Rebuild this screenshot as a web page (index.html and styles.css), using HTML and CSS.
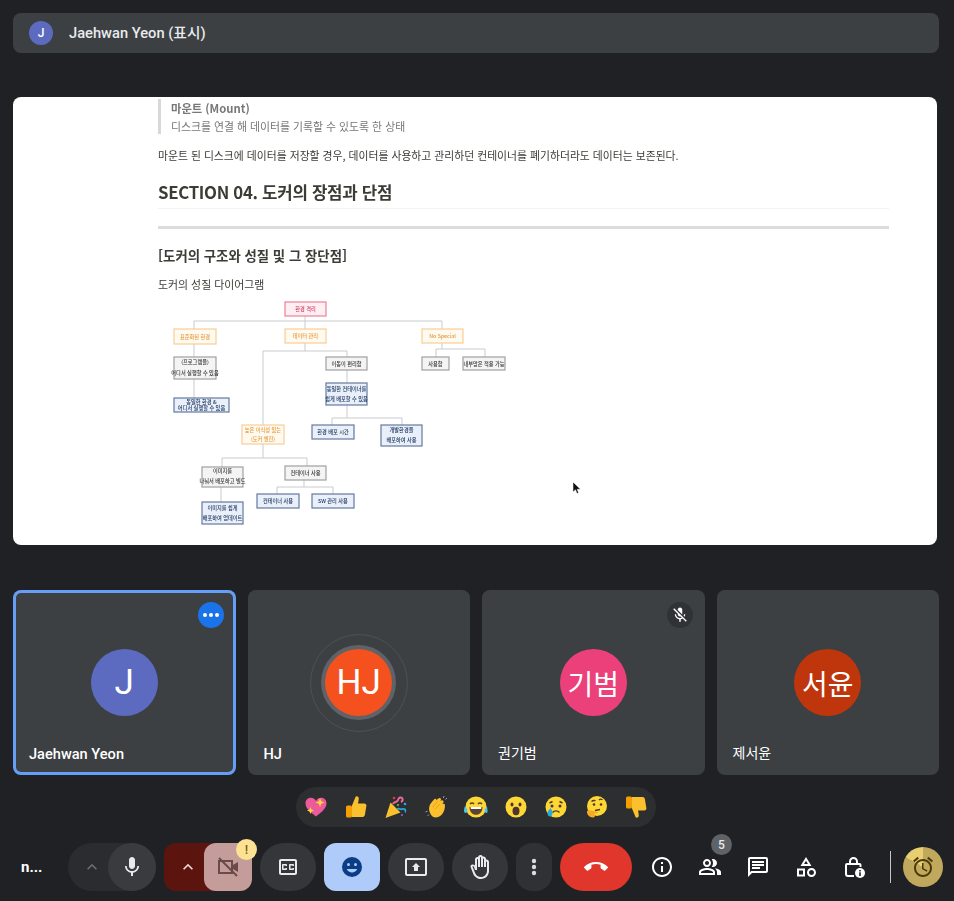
FILE: index.html
```html
<!DOCTYPE html>
<html lang="ko">
<head>
  <meta charset="UTF-8">
  <title>Meet</title>
  <link rel="stylesheet" href="styles.css">
</head>
<body>
  <div class="page">
    <!-- 발표자 표시줄 -->
    <div class="presenter-bar">
      <span class="mini-avatar">J</span>
      <span class="presenter-name">Jaehwan Yeon (표시)</span>
    </div>

    <!-- 공유 화면 -->
    <div class="slide">
      <div class="doc">
        <div class="quote">
          <p class="quote-title">마운트 (Mount)</p>
          <p class="quote-text">디스크를 연결 해 데이터를 기록할 수 있도록 한 상태</p>
        </div>
        <p class="para">마운트 된 디스크에 데이터를 저장할 경우, 데이터를 사용하고 관리하던 컨테이너를 폐기하더라도 데이터는 보존된다.</p>
        <h1 class="sec-title">SECTION 04. 도커의 장점과 단점</h1>
        <div class="rule-faint"></div>
        <div class="rule"></div>
        <h2 class="sub-title">[도커의 구조와 성질 및 그 장단점]</h2>
        <p class="caption">도커의 성질 다이어그램</p>
        <svg class="diagram" viewBox="150 295 370 240" width="370" height="240">
          <g class="links">
            <path d="M305 316V321M194 329V321H442V329M305 321V329"/>
            <path d="M194 344V357M194 379V398"/>
            <path d="M305 343V351M263 425V351H347V357"/>
            <path d="M347 370V383M347 405V418M332 425V418H402V425"/>
            <path d="M263 444V458M222 467V458H307V466"/>
            <path d="M221 487V502M304 480V487M277 494V487H333V494"/>
            <path d="M442 343V349M436 357V349H485V357"/>
          </g>
          <g class="node red"><rect x="285" y="302" width="41" height="14"/><text x="305.500" y="311">환경 격리</text></g>
          <g class="node orange"><rect x="174" y="329" width="42" height="15"/><text x="195" y="339">표준화된 환경</text></g>
          <g class="node orange"><rect x="285" y="329" width="41" height="14"/><text x="305.500" y="338">데이터 관리</text></g>
          <g class="node orange"><rect x="422" y="329" width="41" height="14"/><text x="442.500" y="338">No Special</text></g>
          <g class="node gray"><rect x="174" y="357" width="42" height="22"/><text x="195" y="364">(프로그램을)</text><text x="195" y="375">어디서 실행할 수 있음</text></g>
          <g class="node blue"><rect x="174" y="398" width="55" height="14"/><text x="201.500" y="404">동일한 환경 &amp;</text><text x="201.500" y="410">어디서 실행할 수 있음</text></g>
          <g class="node gray"><rect x="326" y="357" width="41" height="13"/><text x="346.500" y="366">이동이 편리함</text></g>
          <g class="node blue"><rect x="326" y="383" width="41" height="22"/><text x="346.500" y="391">동일한 컨테이너를</text><text x="346.500" y="401">쉽게 배포할 수 있음</text></g>
          <g class="node blue"><rect x="312" y="425" width="42" height="14"/><text x="333" y="434">환경 배포 시간</text></g>
          <g class="node blue"><rect x="381" y="425" width="41" height="21"/><text x="401.500" y="432">개발환경을</text><text x="401.500" y="442">배포하여 사용</text></g>
          <g class="node orange"><rect x="242" y="425" width="42" height="19"/><text x="263" y="432">높은 이식성 있는</text><text x="263" y="441">(도커 엔진)</text></g>
          <g class="node gray"><rect x="202" y="467" width="41" height="20"/><text x="222.500" y="473">이미지를</text><text x="222.500" y="483">나눠서 배포하고 빌드</text></g>
          <g class="node gray"><rect x="285" y="466" width="41" height="14"/><text x="305.500" y="475">컨테이너 사용</text></g>
          <g class="node blue"><rect x="202" y="502" width="41" height="22"/><text x="222.500" y="510">이미지를 쉽게</text><text x="222.500" y="520">배포하여 업데이트</text></g>
          <g class="node blue"><rect x="257" y="494" width="42" height="14"/><text x="278" y="503">컨테이너 사용</text></g>
          <g class="node blue"><rect x="312" y="494" width="42" height="14"/><text x="333" y="503">SW 관리 사용</text></g>
          <g class="node gray"><rect x="422" y="357" width="27" height="13"/><text x="435.500" y="366">사용함</text></g>
          <g class="node gray"><rect x="463" y="357" width="42" height="13"/><text x="484" y="366">내부망은 적용 가능</text></g>
        </svg>
      </div>
      <svg class="cursor" viewBox="0 0 10 14" width="10" height="14"><path d="M1 1v10l2.500-2.200L5 12.500l1.600-.7L5.200 8.300H8.500z"/></svg>
    </div>

    <!-- 참가자 타일 -->
    <div class="tiles">
      <div class="tile selected">
        <span class="avatar indigo">J</span>
        <span class="tile-name">Jaehwan Yeon</span>
        <span class="tile-badge blue-dot"><i></i><i></i><i></i></span>
      </div>
      <div class="tile">
        <span class="ring"><span class="avatar orange-bg talking">HJ</span></span>
        <span class="tile-name">HJ</span>
      </div>
      <div class="tile">
        <span class="avatar pink ko">기범</span>
        <span class="tile-name ko-name">권기범</span>
        <span class="tile-badge muted">
          <svg viewBox="0 0 24 24" width="18" height="18"><path d="M19 11h-1.700c0 .74-.16 1.430-.43 2.050l1.230 1.230c.56-.98.9-2.090.9-3.280zm-4.020.17c0-.06.02-.11.02-.17V5c0-1.660-1.340-3-3-3S9 3.340 9 5v.18l5.980 5.990zM4.270 3L3 4.270l6.010 6.010V11c0 1.660 1.330 3 2.990 3 .22 0 .44-.03.65-.08l1.660 1.660c-.71.33-1.500.52-2.310.52-2.760 0-5.300-2.100-5.300-5.100H5c0 3.410 2.720 6.230 6 6.720V21h2v-3.280c.91-.13 1.770-.45 2.540-.9L19.730 21 21 19.730 4.270 3z"/></svg>
        </span>
      </div>
      <div class="tile">
        <span class="avatar rust ko">서윤</span>
        <span class="tile-name ko-name">제서윤</span>
      </div>
    </div>

    <!-- 이모지 반응 -->
    <div class="emoji-row">
      <div class="emoji-bar">
        <svg class="emo" viewBox="0 0 24 24"><path fill="#ec5a9b" d="M12 21.500C5 16.500 1.500 12.500 1.500 8.300 1.500 5 4 2.800 6.800 2.800c2.200 0 4 1.200 5.200 3.200 1.200-2 3-3.200 5.200-3.200 2.800 0 5.300 2.200 5.300 5.500 0 4.200-3.500 8.200-10.500 13.200z"/><path fill="#fdd835" d="M16 3l1.200 3.300L20.500 7.500l-3.300 1.200L16 12l-1.200-3.300-3.300-1.200 3.300-1.200zM6.500 12l1 2.500 2.500 1-2.500 1-1 2.500-1-2.500-2.500-1 2.500-1z"/></svg>
        <svg class="emo" viewBox="0 0 24 24"><path fill="#fbc02d" d="M8 10.500l3.500-8.500c.5-1.200 3.300-.8 3.300 1.500 0 1.500-.5 3.200-.8 5h6.200c1.500 0 2.400 1.200 2.200 2.300l-1.500 9c-.2 1.200-1 2.200-2.200 2.200H8z"/><rect fill="#f59f00" x="2" y="10.500" width="6" height="12" rx="1.500"/></svg>
        <svg class="emo" viewBox="0 0 24 24"><path fill="#fbc02d" d="M1.500 23l5-15.500 10 10z"/><path fill="none" stroke="#e86a9a" stroke-width="2" d="M9 9c1-3 4-1 5-4s3-3 4-2 1 3-1 4"/><path fill="none" stroke="#29a8df" stroke-width="1.800" d="M13 14c3-1 3 1 6 0s2 3 3 3"/><circle fill="#e53935" cx="10" cy="3" r="1.300"/><circle fill="#29a8df" cx="21" cy="9" r="1.300"/><circle fill="#8e5bd0" cx="18" cy="20" r="1.100"/><circle fill="#7cb342" cx="14" cy="10" r="1.100"/></svg>
        <svg class="emo" viewBox="0 0 24 24"><path fill="#fbc02d" d="M6 9.500c1.500-2 3-4 4.500-5.500 1-1 2.500.2 1.700 1.500 1.500-2 3.300-3 4.300-2.200s.5 1.800-.3 2.800c1.200-1 2.700-1 3.200 0s-.2 1.800-1 2.800c1-.5 2.300-.3 2.500.8.3 3.200-.6 7-3 9.800-2.700 3-6.500 3.800-9 2.300C5.500 19 4 14 6 9.500z"/><path fill="none" stroke="#f59f00" stroke-width="1" d="M8.500 12l5-5.500M11 14l5-5"/><path fill="none" stroke="#9aa0a6" stroke-width="1" d="M1.500 17l2-.8M3.500 21l1.500-1.500M20 1l-.6 2M23 3l-1.500 1.500"/></svg>
        <svg class="emo" viewBox="0 0 24 24"><circle fill="#fdd835" cx="12" cy="12" r="10.500"/><path fill="#5d4037" d="M5.500 12h13c0 5-3 7.800-6.500 7.800S5.500 17 5.500 12z"/><path fill="#fff" d="M6.500 12h11l-.4 2H6.900z"/><path fill="none" stroke="#5d4037" stroke-width="1.500" d="M6 9c1-1.500 3-1.500 4 0M14 9c1-1.500 3-1.500 4 0"/><path fill="#4fc3f7" d="M1 11c1 1.500 2.500 3 2.500 4.500 0 1.500-1 2.500-2 2.500S0 17 0 15.500C0 14 .5 12.500 1 11zM23 11c-1 1.500-2.500 3-2.500 4.500 0 1.500 1 2.500 2 2.500s1-1 1-2.500c0-1.500-.5-3-.5-4.500z"/></svg>
        <svg class="emo" viewBox="0 0 24 24"><circle fill="#fdd835" cx="12" cy="12" r="10.500"/><ellipse fill="#4e342e" cx="8" cy="9.500" rx="1.500" ry="2"/><ellipse fill="#4e342e" cx="16" cy="9.500" rx="1.500" ry="2"/><ellipse fill="#4e342e" cx="12" cy="16" rx="3.500" ry="4.200"/></svg>
        <svg class="emo" viewBox="0 0 24 24"><circle fill="#fdd835" cx="12" cy="12" r="10.500"/><circle fill="#4e342e" cx="8" cy="11" r="1.500"/><circle fill="#4e342e" cx="16" cy="11" r="1.500"/><path fill="none" stroke="#4e342e" stroke-width="1.500" d="M8.500 17.500c2-2 5-2 7 0M5.500 8l3-1.500M18.500 8l-3-1.500"/><path fill="#29a8df" d="M6.500 13c1 1.500 2 3 2 5s-1 3.500-2.500 3.500S3.500 20 3.500 18c0-2 2-3.500 3-5z"/></svg>
        <svg class="emo" viewBox="0 0 24 24"><circle fill="#fdd835" cx="13" cy="11" r="10"/><circle fill="#4e342e" cx="10" cy="9.500" r="1.300"/><circle fill="#4e342e" cx="17" cy="9.500" r="1.300"/><path fill="none" stroke="#4e342e" stroke-width="1.300" d="M7.500 6.500c1-1 2.500-1.200 4-.8M15 5c1-1 2.500-1 3.500-.2M11 15.500l5-1"/><path fill="#f9a825" d="M3 16c2-1 4-1 6 0l4 .5c1 .2 1 1.500 0 1.700l-3 .3 1 2c.2 1.500-1 2-2.500 2-3 0-6-3-5.500-6.500z"/></svg>
        <svg class="emo" viewBox="0 0 24 24"><path fill="#fbc02d" d="M8 13.500l3.500 8.500c.5 1.200 3.300.8 3.300-1.500 0-1.500-.5-3.200-.8-5h6.200c1.500 0 2.400-1.200 2.200-2.300l-1.500-9c-.2-1.200-1-2.200-2.200-2.200H8z"/><rect fill="#f59f00" x="2" y="1.500" width="6" height="12" rx="1.500"/></svg>
      </div>
    </div>

    <!-- 하단 도구 모음 -->
    <div class="toolbar">
      <span class="meeting-name">n...</span>

      <div class="combo combo-mic">
        <span class="chev chev-dim"><svg viewBox="0 0 24 24" width="20" height="20"><path d="M7.400 15.400L12 10.800l4.600 4.600L18 14l-6-6-6 6z"/></svg></span>
        <span class="combo-btn mic-btn"><svg viewBox="0 0 24 24" width="24" height="24"><path d="M12 14c1.660 0 3-1.340 3-3V5c0-1.660-1.340-3-3-3S9 3.340 9 5v6c0 1.660 1.340 3 3 3zm5.300-3c0 3-2.540 5.100-5.300 5.100S6.700 14 6.700 11H5c0 3.410 2.720 6.230 6 6.720V21h2v-3.280c3.280-.48 6-3.300 6-6.720h-1.700z"/></svg></span>
      </div>

      <div class="combo combo-cam">
        <span class="chev"><svg viewBox="0 0 24 24" width="20" height="20"><path d="M7.400 15.400L12 10.800l4.600 4.600L18 14l-6-6-6 6z"/></svg></span>
        <span class="combo-btn cam-btn"><svg viewBox="0 0 24 24" width="24" height="24"><path fill="none" stroke="#6b4a4a" stroke-width="2" d="M3 6h13v12H3z"/><path fill="#6b4a4a" d="M16 10.500l6-3.500v10l-6-3.500z"/><path fill="none" stroke="#6b4a4a" stroke-width="2" d="M3 3l18 18"/></svg></span>
        <span class="warn">!</span>
      </div>

      <span class="pill"><svg viewBox="0 0 24 24" width="24" height="24"><path d="M19 4H5c-1.110 0-2 .9-2 2v12c0 1.100.89 2 2 2h14c1.100 0 2-.9 2-2V6c0-1.100-.9-2-2-2zm0 14H5V6h14v12zM7 15h3c.55 0 1-.45 1-1v-1H9.500v.5h-2v-3h2v.5H11v-1c0-.55-.45-1-1-1H7c-.55 0-1 .45-1 1v4c0 .55.45 1 1 1zm7 0h3c.55 0 1-.45 1-1v-1h-1.500v.5h-2v-3h2v.5H18v-1c0-.55-.45-1-1-1h-3c-.55 0-1 .45-1 1v4c0 .55.45 1 1 1z"/></svg></span>

      <span class="pill pill-active"><svg viewBox="0 0 24 24" width="24" height="24"><circle fill="#0b3c86" cx="12" cy="12" r="10"/><circle fill="#aecbfa" cx="8.500" cy="9.500" r="1.500"/><circle fill="#aecbfa" cx="15.500" cy="9.500" r="1.500"/><path fill="#aecbfa" d="M6.800 14h10.400c-.8 2.200-2.800 3.600-5.200 3.600S7.600 16.200 6.800 14z"/></svg></span>

      <span class="pill"><svg viewBox="0 0 24 24" width="24" height="24"><path d="M21 3H3c-1.110 0-2 .89-2 2v14c0 1.110.89 2 2 2h18c1.110 0 2-.89 2-2V5c0-1.110-.89-2-2-2zm0 16.020H3V4.980h18v14.040zM10 12H8l4-4 4 4h-2v4h-4v-4z"/></svg></span>

      <span class="pill"><svg viewBox="0 0 24 24" width="24" height="24"><path d="M21 7c0-1.380-1.120-2.500-2.500-2.500-.17 0-.34.02-.5.05V4c0-1.380-1.120-2.500-2.500-2.500-.23 0-.46.03-.67.09C14.460.66 13.560 0 12.500 0c-1.230 0-2.250.89-2.460 2.060C9.870 2.020 9.690 2 9.500 2 8.120 2 7 3.120 7 4.500v5.890c-.34-.31-.76-.54-1.220-.66L5 9.520c-.83-.23-1.700.09-2.190.83-.38.57-.4 1.310-.15 1.950l2.560 6.430C6.490 21.910 9.570 24 13 24c4.420 0 8-3.580 8-8V7zm-2 9c0 3.310-2.690 6-6 6-2.610 0-4.950-1.590-5.910-4.010l-2.600-6.540c-.06-.17.1-.33.27-.29l.61.16c.28.07.51.27.61.54L7 15h2V4.500c0-.28.22-.5.5-.5s.5.22.5.5V12h2V2.500c0-.28.22-.5.5-.5s.5.22.5.5V12h2V4c0-.28.22-.5.5-.5s.5.220.5.5v8h2V7c0-.28.22-.5.5-.5s.5.22.5.5v9z"/></svg></span>

      <span class="more-btn"><svg viewBox="0 0 24 24" width="24" height="24"><circle cx="12" cy="6" r="2.200"/><circle cx="12" cy="12" r="2.200"/><circle cx="12" cy="18" r="2.200"/></svg></span>

      <span class="end-btn"><svg viewBox="0 0 24 24" width="24" height="24"><path d="M12 9c-1.600 0-3.150.25-4.600.72v3.100c0 .39-.23.74-.56.9-.98.49-1.870 1.120-2.660 1.850-.18.18-.43.28-.7.28-.28 0-.53-.11-.71-.29L.29 13.080c-.18-.17-.29-.42-.29-.7 0-.28.11-.53.29-.71C3.340 8.780 7.460 7 12 7s8.660 1.780 11.710 4.670c.18.18.29.43.29.71 0 .28-.11.53-.29.71l-2.480 2.480c-.18.18-.43.29-.71.29-.27 0-.52-.11-.7-.28-.79-.74-1.690-1.360-2.670-1.850-.33-.16-.56-.5-.56-.9v-3.100C15.150 9.250 13.600 9 12 9z"/></svg></span>

      <div class="side-icons">
        <span class="side-icon"><svg viewBox="0 0 24 24" width="24" height="24"><path d="M11 7h2v2h-2zm0 4h2v6h-2zm1-9C6.480 2 2 6.480 2 12s4.480 10 10 10 10-4.480 10-10S17.520 2 12 2zm0 18c-4.410 0-8-3.590-8-8s3.590-8 8-8 8 3.590 8 8-3.590 8-8 8z"/></svg></span>
        <span class="side-icon"><svg viewBox="0 0 24 24" width="24" height="24"><path d="M16.670 13.130C18.040 14.060 19 15.320 19 17v3h4v-3c0-2.180-3.570-3.470-6.330-3.870z"/><path d="M15 12c2.210 0 4-1.790 4-4s-1.790-4-4-4c-.47 0-.91.1-1.330.24C14.500 5.270 15 6.580 15 8s-.5 2.730-1.330 3.760c.42.14.86.24 1.330.24z"/><path d="M9 12c2.210 0 4-1.790 4-4s-1.790-4-4-4-4 1.790-4 4 1.790 4 4 4zm0-6c1.100 0 2 .9 2 2s-.9 2-2 2-2-.9-2-2 .9-2 2-2z"/><path d="M9 13c-2.670 0-8 1.340-8 4v3h16v-3c0-2.660-5.330-4-8-4zm6 5H3v-.99C3.200 16.290 6.300 15 9 15s5.800 1.290 6 2v1z"/></svg><span class="count">5</span></span>
        <span class="side-icon"><svg viewBox="0 0 24 24" width="24" height="24"><path d="M20 2H4c-1.100 0-2 .9-2 2v18l4-4h14c1.100 0 2-.9 2-2V4c0-1.100-.9-2-2-2zm0 14H5.170L4 17.170V4h16v12z"/><path d="M6 12h8v2H6zM6 9h12v2H6zM6 6h12v2H6z"/></svg></span>
        <span class="side-icon"><svg viewBox="0 0 24 24" width="24" height="24"><path d="M12 2l-5.500 9h11L12 2zm0 3.840L13.930 9h-3.870L12 5.840zM17.500 13c-2.490 0-4.500 2.010-4.500 4.500s2.010 4.500 4.500 4.500 4.500-2.010 4.500-4.500-2.010-4.500-4.500-4.500zm0 7c-1.380 0-2.500-1.120-2.500-2.500s1.120-2.500 2.500-2.500 2.500 1.120 2.500 2.500-1.120 2.500-2.500 2.500zM3 21.500h8v-8H3v8zm2-6h4v4H5v-4z"/></svg></span>
        <span class="side-icon"><svg viewBox="0 0 24 24" width="24" height="24"><path fill="none" stroke="#fff" stroke-width="2" d="M12 21H6a2 2 0 0 1-2-2V10a1 1 0 0 1 1-1h12.500a1 1 0 0 1 1 1v2M8 9V6.500a3.500 3.500 0 0 1 7 0V9"/><circle cx="18" cy="18" r="5"/><path fill="#202124" d="M17.200 17.200h1.600V21h-1.600zM17.200 15h1.600v1.400h-1.600z"/></svg></span>
      </div>

      <span class="divider"></span>
      <span class="timer"><svg viewBox="0 0 24 24" width="24" height="24"><path d="M22 5.720l-4.600-3.860-1.290 1.530 4.600 3.860L22 5.720zM7.880 3.390L6.600 1.860 2 5.710l1.290 1.530 4.590-3.850zM12.500 8H11v6l4.750 2.850.75-1.230-4-2.370V8zM12 4c-4.970 0-9 4.030-9 9s4.030 9 9 9 9-4.030 9-9-4.030-9-9-9zm0 16c-3.870 0-7-3.130-7-7s3.130-7 7-7 7 3.130 7 7-3.130 7-7 7z"/></svg></span>
    </div>
  </div>
</body>
</html>
```

FILE: styles.css
```css
/* 기본 */
* {
  box-sizing: border-box;
  margin: 0;
  padding: 0;
}

html, body {
  background: #202124;
}

body {
  font-family: Roboto, "Noto Sans CJK KR", sans-serif;
  color: #e8eaed;
  overflow: hidden;
}

.page {
  width: 954px;
  height: 901px;
  padding: 13px 15px 10px 13px;
}

svg {
  display: block;
  fill: #e8eaed;
}

/* 발표자 표시줄 */
.presenter-bar {
  height: 40px;
  background: #3c4043;
  border-radius: 8px;
  display: flex;
  align-items: center;
  padding-left: 16px;
}

.mini-avatar {
  width: 24px;
  height: 24px;
  border-radius: 50%;
  background: #5c6bc0;
  color: #fff;
  font-size: 12px;
  font-weight: 500;
  display: flex;
  align-items: center;
  justify-content: center;
}

.presenter-name {
  margin-left: 16px;
  font-size: 14.700px;
  font-weight: 500;
  line-height: 18px;
  margin-bottom: 1px;
  color: #e8eaed;
}

/* 공유 화면 */
.slide {
  position: relative;
  margin-top: 44px;
  margin-right: 2px;
  height: 448px;
  background: #fff;
  border-radius: 8px;
  overflow: hidden;
}

.doc {
  width: 731px;
  margin-left: 145px;
  padding-top: 2px;
  font-family: "Noto Sans CJK KR", sans-serif;
  color: #3d3b36;
  filter: blur(0.35px);
}

.quote {
  height: 35px;
  border-left: 3px solid #d8d8d8;
  padding-left: 10px;
  color: #777;
}

.quote-title {
  font-size: 11.300px;
  font-weight: 700;
  line-height: 18px;
}

.quote-text {
  font-size: 10.870px;
  line-height: 18px;
}

.para {
  margin-top: 12px;
  font-size: 10.830px;
  line-height: 18px;
}

.sec-title {
  margin-top: 16px;
  font-size: 16.800px;
  font-weight: 700;
  line-height: 24px;
  letter-spacing: -0.3px;
}

.rule-faint {
  height: 1px;
  margin-top: 4px;
  background: #f3f3f3;
}

.rule {
  height: 3px;
  margin-top: 17px;
  background: #dcdcdc;
}

.sub-title {
  margin-top: 16px;
  font-size: 13.400px;
  font-weight: 700;
  line-height: 20px;
}

.caption {
  margin-top: 10px;
  font-size: 10.900px;
  line-height: 18px;
}

.diagram {
  margin: 2px 0 0 -8px;
  filter: blur(0.3px);
}

.links path {
  fill: none;
  stroke: #c8cbce;
  stroke-width: 1;
}

.node rect {
  stroke-width: 1.200;
}

.node text {
  font-size: 5.200px;
  font-weight: 500;
  text-anchor: middle;
}

.red rect { fill: #fdeff2; stroke: #ef7f96; }
.red text { fill: #d83c62; }
.orange rect { fill: #fffaf0; stroke: #f8cd94; }
.orange text { fill: #e59a3c; }
.gray rect { fill: #f4f4f4; stroke: #a0a0a0; }
.gray text { fill: #333; }
.blue rect { fill: #e9f0fa; stroke: #64799f; }
.blue text { fill: #1e3560; }

.cursor {
  position: absolute;
  left: 559px;
  top: 384px;
  fill: #111;
  stroke: #fff;
  stroke-width: 0.5;
}

/* 참가자 타일 */
.tiles {
  display: grid;
  grid-template-columns: repeat(4, 1fr);
  gap: 12px;
  margin-top: 45px;
  height: 185px;
}

.tile {
  position: relative;
  background: #3c4043;
  border-radius: 8px;
  display: flex;
  align-items: center;
  justify-content: center;
}

.tile.selected {
  box-shadow: inset 0 0 0 3px #669df6;
}

.avatar {
  width: 67px;
  height: 67px;
  border-radius: 50%;
  color: #fff;
  font-size: 35px;
  display: flex;
  align-items: center;
  justify-content: center;
}

.avatar.ko {
  font-size: 28px;
  font-family: "Noto Sans CJK KR", sans-serif;
}

.indigo { background: #5c6bc0; }
.orange-bg { background: #f4511e; }
.pink { background: #ec407a; }
.rust { background: #bf360c; }

.ring {
  width: 98px;
  height: 98px;
  border-radius: 50%;
  border: 1px solid rgba(255, 255, 255, 0.09);
  display: flex;
  align-items: center;
  justify-content: center;
}

.talking {
  box-shadow: 0 0 0 4px #5f6368;
}

.tile-name {
  position: absolute;
  left: 16px;
  bottom: 12px;
  font-size: 14.600px;
  font-weight: 500;
  line-height: 18px;
  color: #fff;
}

.ko-name {
  bottom: 14px;
  font-family: "Noto Sans CJK KR", sans-serif;
  font-size: 14px;
  font-weight: 400;
}

.tile-badge {
  position: absolute;
  top: 12px;
  right: 12px;
  width: 26px;
  height: 26px;
  border-radius: 50%;
  display: flex;
  align-items: center;
  justify-content: center;
  gap: 2px;
}

.blue-dot {
  background: #1a73e8;
}

.blue-dot i {
  width: 4px;
  height: 4px;
  border-radius: 50%;
  background: #fff;
}

.muted {
  background: #303336;
}

.muted svg {
  fill: #fff;
}

/* 이모지 반응 */
.emoji-row {
  margin-top: 12px;
  display: flex;
  justify-content: center;
}

.emoji-bar {
  width: 360px;
  height: 40px;
  background: #2d2e30;
  border-radius: 20px;
  display: flex;
  align-items: center;
  justify-content: space-around;
}

.emo {
  width: 24px;
  height: 24px;
}

/* 하단 도구 모음 */
.toolbar {
  margin-top: 16px;
  height: 48px;
  margin-left: -13px;
  margin-right: -15px;
  padding-left: 21px;
  display: flex;
  align-items: center;
  gap: 8px;
}

.toolbar > * {
  flex-shrink: 0;
}

.meeting-name {
  width: 39px;
  font-size: 15px;
  font-weight: 700;
  color: #fff;
}

.combo {
  position: relative;
  width: 88px;
  height: 48px;
  display: flex;
  align-items: center;
}

.combo-mic {
  background: #2b2c2f;
  border-radius: 24px;
}

.combo-cam {
  background: #5c140f;
  border-radius: 12px;
}

.chev {
  width: 40px;
  display: flex;
  justify-content: center;
  padding-left: 7px;
}

.chev svg {
  fill: #f1d9d6;
}

.chev-dim svg {
  fill: #6a6c70;
}

.combo-btn {
  width: 48px;
  height: 48px;
  display: flex;
  align-items: center;
  justify-content: center;
}

.mic-btn {
  background: #3a3b3e;
  border-radius: 50%;
}

.cam-btn {
  background: #c49d9a;
  border-radius: 12px;
}

.warn {
  position: absolute;
  left: 72px;
  top: -4px;
  width: 21px;
  height: 21px;
  border-radius: 50%;
  background: #fde293;
  color: #7a5c12;
  font-size: 13px;
  font-weight: 500;
  display: flex;
  align-items: center;
  justify-content: center;
}

.pill {
  width: 56px;
  height: 48px;
  background: #35363a;
  border-radius: 24px;
  display: flex;
  align-items: center;
  justify-content: center;
}

.pill-active {
  background: #aecbfa;
  border-radius: 12px;
}

.more-btn {
  width: 36px;
  height: 48px;
  background: #303134;
  border-radius: 16px;
  display: flex;
  align-items: center;
  justify-content: center;
}

.more-btn svg {
  fill: #dadce0;
}

.end-btn {
  width: 72px;
  height: 48px;
  background: #e0362c;
  border-radius: 24px;
  display: flex;
  align-items: center;
  justify-content: center;
}

.end-btn svg {
  fill: #fff;
}

.side-icons {
  display: flex;
  margin-left: -2px;
}

.side-icon {
  position: relative;
  width: 48px;
  height: 48px;
  display: flex;
  align-items: center;
  justify-content: center;
}

.side-icon svg {
  fill: #fff;
}

.count {
  position: absolute;
  left: 25px;
  top: -9px;
  width: 21px;
  height: 21px;
  border-radius: 50%;
  background: #5f6368;
  color: #e8eaed;
  font-size: 12px;
  font-weight: 500;
  display: flex;
  align-items: center;
  justify-content: center;
}

.divider {
  width: 1px;
  height: 32px;
  margin-left: 4px;
  background: #c4c7c5;
}

.timer {
  width: 40px;
  height: 40px;
  margin-left: 4px;
  border-radius: 50%;
  background: conic-gradient(#c0a95c 0 300deg, #e8cf72 300deg 360deg);
  display: flex;
  align-items: center;
  justify-content: center;
}

.timer svg {
  fill: #4a3a0a;
}
```
